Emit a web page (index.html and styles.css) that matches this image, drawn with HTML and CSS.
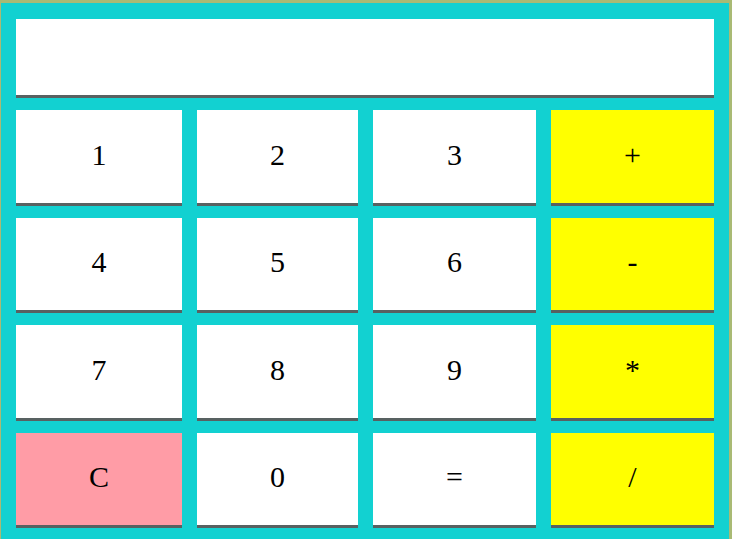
FILE: index.html
```html
<!DOCTYPE html>
<html>
<head>
<meta charset="utf-8">
<link rel="stylesheet" href="styles.css">
</head>
<body>
<div class="calc">
  <div class="display"></div>
  <div class="keys">
    <button class="key">1</button>
    <button class="key">2</button>
    <button class="key">3</button>
    <button class="key op">+</button>
    <button class="key">4</button>
    <button class="key">5</button>
    <button class="key">6</button>
    <button class="key op">-</button>
    <button class="key">7</button>
    <button class="key">8</button>
    <button class="key">9</button>
    <button class="key op">*</button>
    <button class="key clear">C</button>
    <button class="key">0</button>
    <button class="key">=</button>
    <button class="key op">/</button>
  </div>
</div>
</body>
</html>
```
FILE: styles.css
```css
html, body {
  margin: 0;
  padding: 0;
  background: #a9ba74;
  overflow: hidden;
}
.calc {
  margin: 3px 0 0 1px;
  width: 728px;
  box-sizing: border-box;
  padding: 16px 15px 15px 15px;
  background: #12d1d1;
}
.display {
  height: 76px;
  background: #ffffff;
  border-bottom: 3px solid #586161;
}
.keys {
  margin-top: 12px;
  display: grid;
  grid-template-columns: 166px 161px 163px 163px;
  grid-auto-rows: 95.5px;
  column-gap: 15px;
  row-gap: 12px;
}
.key {
  margin: 0;
  padding: 0 0 3px 0;
  border: none;
  border-bottom: 3px solid #586161;
  background: #ffffff;
  color: #000000;
  font-family: "Liberation Serif", "Times New Roman", serif;
  font-size: 30px;
  line-height: 1;
  cursor: pointer;
}
.op {
  background: #ffff00;
}
.clear {
  background: #ff9ca6;
}
```
